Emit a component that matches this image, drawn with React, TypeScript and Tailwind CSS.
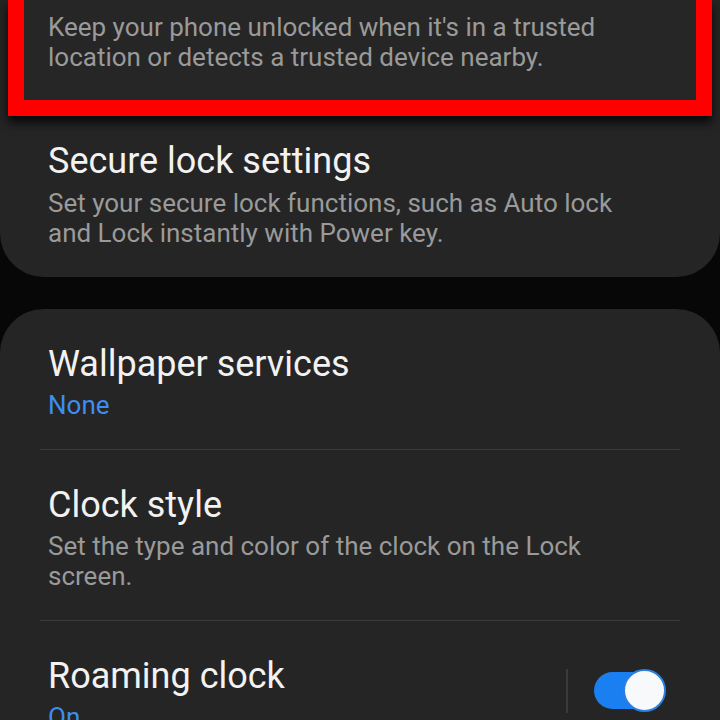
import React from 'react'

type RowProps = {
  title: string
  sub: string
  blue?: boolean
  toggle?: boolean
  divider?: boolean
}

function Row({ title, sub, blue, toggle, divider }: RowProps) {
  return (
    <div>
      <div className="flex items-start pl-[48px] pr-[54px] pt-[35px] pb-[29px]">
        <div className="flex-1">
          <div className="text-[36px] leading-[40px] text-[#f2f2f2]">{title}</div>
          <div
            className={
              'mt-[6px] text-[26px] leading-[30px] ' +
              (blue ? 'text-[#3e8ef0]' : 'text-[#9a9a9a]')
            }
          >
            {sub}
          </div>
        </div>
        {toggle && (
          <div className="mt-[13px] flex items-center">
            <div className="h-[44px] w-[2px] bg-[#3a3a3a]" />
            <div className="relative ml-[26px] h-[44px] w-[72px]">
              <div className="absolute left-0 top-[3px] h-[37px] w-[62px] rounded-full bg-[#1a7ff0]" />
              <div className="absolute right-0 top-0 h-[43px] w-[43px] rounded-full border-2 border-[#2b7fe0] bg-[#f8f9fb]" />
            </div>
          </div>
        )}
      </div>
      {divider && <div className="mx-[40px] h-px bg-[#3a3a3a]" />}
    </div>
  )
}

export default function App() {
  return (
    <div
      className="h-[720px] w-[720px] overflow-hidden bg-[#070707]"
      style={{ fontFamily: 'Roboto, "Noto Sans", sans-serif' }}
    >
      {/* lock screen card, top cut off */}
      <div className="rounded-b-[44px] bg-[#252525] pb-[29px]">
        <div className="mx-[8px] border-x-[16px] border-b-[16px] border-[#ff0000] bg-[#262626] px-[24px] pt-[12px] pb-[28px] shadow-[0_6px_10px_rgba(0,0,0,0.85)]">
          <p className="text-[26px] leading-[30px] text-[#9a9a9a]">
            Keep your phone unlocked when it's in a trusted
            <br />
            location or detects a trusted device nearby.
          </p>
        </div>
        <div className="px-[48px] pt-[23px]">
          <div className="text-[36px] leading-[44px] text-[#f2f2f2]">Secure lock settings</div>
          <p className="mt-[5px] text-[26px] leading-[30px] text-[#9a9a9a]">
            Set your secure lock functions, such as Auto lock
            <br />
            and Lock instantly with Power key.
          </p>
        </div>
      </div>

      <div className="mt-[32px] rounded-t-[44px] bg-[#252525]">
        <Row title="Wallpaper services" sub="None" blue divider />
        <div>
          <div className="pl-[48px] pr-[54px] pt-[35px] pb-[29px]">
            <div className="text-[36px] leading-[40px] text-[#f2f2f2]">Clock style</div>
            <p className="mt-[6px] text-[26px] leading-[30px] text-[#9a9a9a]">
              Set the type and color of the clock on the Lock
              <br />
              screen.
            </p>
          </div>
          <div className="mx-[40px] h-px bg-[#3a3a3a]" />
        </div>
        <Row title="Roaming clock" sub="On" blue toggle />
      </div>
    </div>
  )
}
